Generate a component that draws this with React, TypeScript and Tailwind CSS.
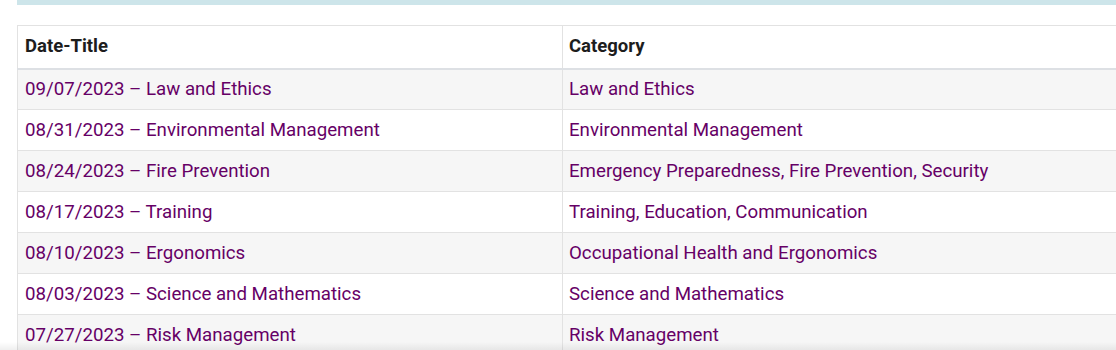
const rows = [
  { title: '09/07/2023 – Law and Ethics', category: 'Law and Ethics' },
  { title: '08/31/2023 – Environmental Management', category: 'Environmental Management' },
  { title: '08/24/2023 – Fire Prevention', category: 'Emergency Preparedness, Fire Prevention, Security' },
  { title: '08/17/2023 – Training', category: 'Training, Education, Communication' },
  { title: '08/10/2023 – Ergonomics', category: 'Occupational Health and Ergonomics' },
  { title: '08/03/2023 – Science and Mathematics', category: 'Science and Mathematics' },
  { title: '07/27/2023 – Risk Management', category: 'Risk Management' },
]

export default function App() {
  return (
    <div className="relative h-[350px] w-[1116px] overflow-hidden bg-white pl-[17px] font-['Roboto',sans-serif]">
      <div className="h-[5px] w-full bg-[#cde5ea]" />
      <div className="pt-[20px]">
        <table className="w-[1140px] border-collapse border border-[#e2e2e2] text-left">
          <thead>
            <tr className="h-[43px] border-b-2 border-[#dde0e4]">
              <th className="w-[545px] border-r border-[#e2e2e2] px-[7px] text-[18.5px] font-bold text-[#1d1d1d]">Date-Title</th>
              <th className="pl-[6px] pr-[7px] text-[18.5px] font-bold text-[#1d1d1d]">Category</th>
            </tr>
          </thead>
          <tbody>
            {rows.map((row, i) => (
              <tr
                key={row.title}
                className={`h-[41px] border-b border-[#e2e2e2] ${i % 2 === 0 ? 'bg-[#f6f6f6]' : 'bg-white'}`}
              >
                <td className="border-r border-[#e2e2e2] px-[7px] text-[18.7px] text-[#660066]">{row.title}</td>
                <td className="pl-[6px] pr-[7px] text-[18.7px] text-[#660066]">{row.category}</td>
              </tr>
            ))}
          </tbody>
        </table>
      </div>
      <div className="pointer-events-none absolute bottom-0 left-0 h-[8px] w-full bg-gradient-to-b from-transparent to-[#00000010]" />
    </div>
  )
}
